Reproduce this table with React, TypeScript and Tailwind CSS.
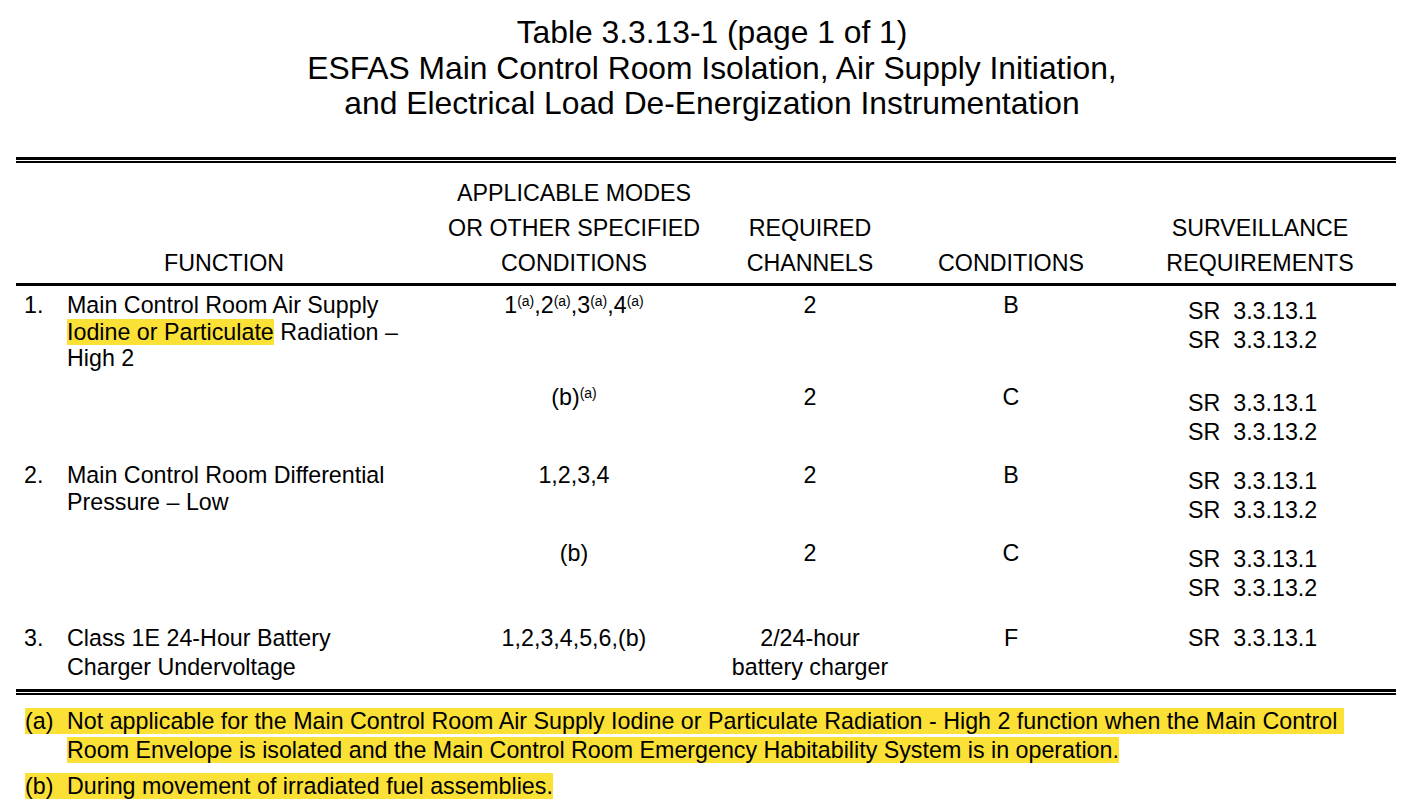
import React from 'react';

const cols = 'grid grid-cols-[416px_284px_188px_214px_278px]';

const Sup = ({ children }: { children: React.ReactNode }) => (
  <sup className="text-[14px]">{children}</sup>
);

const Hl = ({ children }: { children: React.ReactNode }) => (
  <span className="bg-[#fbe036] box-decoration-clone">{children}</span>
);

interface RowProps {
  num?: string;
  fn?: React.ReactNode;
  modes: React.ReactNode;
  channels: React.ReactNode;
  cond: string;
  srs: string[];
  height: string;
  lead: string;
  srOffset?: boolean;
}

const Row = ({ num, fn, modes, channels, cond, srs, height, lead, srOffset = true }: RowProps) => (
  <div className={`${cols} ${height} ${lead} pt-[6px]`}>
    <div className="flex">
      <div className="w-[51px] pl-[8px]">{num}</div>
      <div>{fn}</div>
    </div>
    <div className="text-center">{modes}</div>
    <div className="text-center">{channels}</div>
    <div className="text-center">{cond}</div>
    <div className={srOffset ? 'pl-[70px] mt-[4.5px] leading-[29px]' : 'pl-[70px]'}>
      {srs.map((s) => (
        <div key={s} className="whitespace-pre">
          {s}
        </div>
      ))}
    </div>
  </div>
);

const SR = ['SR  3.3.13.1', 'SR  3.3.13.2'];

export default function App() {
  return (
    <div className="w-[1424px] h-[810px] overflow-hidden bg-white text-black font-['Liberation_Sans',Arial,sans-serif] text-[23.25px]">
      {/* title */}
      <div className="pt-[15px] text-center text-[31.8px] leading-[35.5px]">
        <div>Table 3.3.13-1 (page 1 of 1)</div>
        <div>ESFAS Main Control Room Isolation, Air Supply Initiation,</div>
        <div>and Electrical Load De-Energization Instrumentation</div>
      </div>

      <div className="ml-4 w-[1380px] mt-[35.5px]">
        {/* top double rule */}
        <div className="h-[3px] bg-black" />
        <div className="h-px" />
        <div className="h-[2px] bg-black" />

        {/* header */}
        <div className={`${cols} pt-[13px] pb-[2px] leading-[35px] border-b-[3px] border-black`}>
          <div className="flex items-end justify-center">FUNCTION</div>
          <div className="flex flex-col items-center justify-end text-center">
            <div>APPLICABLE MODES</div>
            <div>OR OTHER SPECIFIED</div>
            <div>CONDITIONS</div>
          </div>
          <div className="flex flex-col items-center justify-end text-center">
            <div>REQUIRED</div>
            <div>CHANNELS</div>
          </div>
          <div className="flex items-end justify-center">CONDITIONS</div>
          <div className="flex flex-col items-center justify-end text-center pl-[6px]">
            <div>SURVEILLANCE</div>
            <div>REQUIREMENTS</div>
          </div>
        </div>

        {/* body */}
        <Row
          num="1."
          fn={
            <>
              Main Control Room Air Supply
              <br />
              <Hl>Iodine or Particulate</Hl> Radiation –
              <br />
              High 2
            </>
          }
          modes={
            <>
              1<Sup>(a)</Sup>,2<Sup>(a)</Sup>,3<Sup>(a)</Sup>,4<Sup>(a)</Sup>
            </>
          }
          channels="2"
          cond="B"
          srs={SR}
          height="h-[92px]"
          lead="leading-[26.5px]"
        />
        <Row
          modes={
            <>
              (b)<Sup>(a)</Sup>
            </>
          }
          channels="2"
          cond="C"
          srs={SR}
          height="h-[78px]"
          lead="leading-[26.5px]"
        />
        <Row
          num="2."
          fn={
            <>
              Main Control Room Differential
              <br />
              Pressure – Low
            </>
          }
          modes="1,2,3,4"
          channels="2"
          cond="B"
          srs={SR}
          height="h-[78px]"
          lead="leading-[26.5px]"
        />
        <Row
          modes="(b)"
          channels="2"
          cond="C"
          srs={SR}
          height="h-[84px]"
          lead="leading-[26.5px]"
        />
        <Row
          num="3."
          fn={
            <>
              Class 1E 24-Hour Battery
              <br />
              Charger Undervoltage
            </>
          }
          modes="1,2,3,4,5,6,(b)"
          channels={
            <>
              2/24-hour
              <br />
              battery charger
            </>
          }
          cond="F"
          srs={['SR  3.3.13.1']}
          height="h-[71px]"
          lead="leading-[28.5px]"
          srOffset={false}
        />

        {/* bottom double rule */}
        <div className="h-[3px] bg-black" />
        <div className="h-px" />
        <div className="h-[2px] bg-black" />
      </div>

      {/* notes */}
      <div className="ml-[25px] mt-[12px] leading-[28.5px]">
        <p className="pl-[42px] indent-[-42px]">
          <Hl>
            <span className="inline-block w-[42px] indent-0">(a)</span>
            Not applicable for the Main Control Room Air Supply Iodine or Particulate Radiation - High 2 function when the Main Control{'\u00a0'}
            <br />
            Room Envelope is isolated and the Main Control Room Emergency Habitability System is in operation.
          </Hl>
        </p>
        <p className="pl-[42px] indent-[-42px] mt-[8px]">
          <Hl>
            <span className="inline-block w-[42px] indent-0">(b)</span>
            During movement of irradiated fuel assemblies.
          </Hl>
        </p>
      </div>
    </div>
  );
}
